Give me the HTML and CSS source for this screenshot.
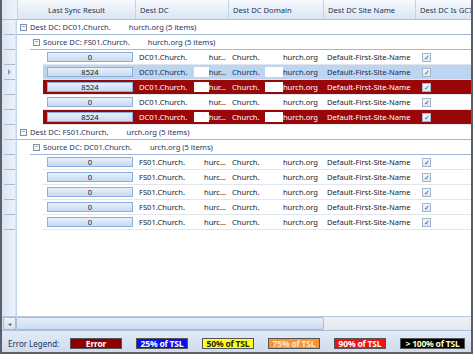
FILE: index.html
```html
<!DOCTYPE html>
<html lang="en">
<head>
    <meta charset="UTF-8">
    <title>Replication Status</title>
    <link rel="stylesheet" href="styles.css">
</head>
<body>
    <div class="window">
        <div class="header">
            <div class="corner"></div>
            <div class="hcell c-sync center">Last Sync Result</div>
            <div class="hcell c-dc">Dest DC</div>
            <div class="hcell c-dom">Dest DC Domain</div>
            <div class="hcell c-site">Dest DC Site Name</div>
            <div class="hcell c-gc">Dest DC Is GC?</div>
        </div>

        <div class="grid-body">
            <!-- group: Dest DC01 -->
            <div class="row">
                <div class="rh"></div>
                <div class="group">
                    <span class="exp">&minus;</span>Dest DC: DC01.Church.<span class="gap"></span>hurch.org (5 items)
                </div>
            </div>
            <div class="row">
                <div class="rh"></div>
                <div class="group lvl2">
                    <span class="exp">&minus;</span>Source DC: FS01.Church.<span class="gap"></span>hurch.org (5 items)
                </div>
            </div>

            <div class="row">
                <div class="rh"></div>
                <div class="indent"></div>
                <div class="cells">
                    <div class="c-sync2"><div class="sync">0</div></div>
                    <div class="cell c-dc"><span>DC01.Church.</span><span class="blob"></span><span>hur…</span></div>
                    <div class="cell c-dom"><span>Church.</span><span class="blob wide"></span><span>hurch.org</span></div>
                    <div class="cell c-site">Default-First-Site-Name</div>
                    <div class="cell c-gc"><span class="chk">&#10003;</span></div>
                </div>
            </div>
            <div class="row">
                <div class="rh"><span class="arrow"></span></div>
                <div class="indent"></div>
                <div class="cells selected">
                    <div class="c-sync2"><div class="sync">8524</div></div>
                    <div class="cell c-dc"><span>DC01.Church.</span><span class="blob"></span><span>hur…</span></div>
                    <div class="cell c-dom"><span>Church.</span><span class="blob wide"></span><span>hurch.org</span></div>
                    <div class="cell c-site">Default-First-Site-Name</div>
                    <div class="cell c-gc"><span class="chk">&#10003;</span></div>
                </div>
            </div>
            <div class="row">
                <div class="rh"></div>
                <div class="indent"></div>
                <div class="cells error">
                    <div class="c-sync2"><div class="sync">8524</div></div>
                    <div class="cell c-dc"><span>DC01.Church.</span><span class="blob"></span><span>hur…</span></div>
                    <div class="cell c-dom"><span>Church.</span><span class="blob wide"></span><span>hurch.org</span></div>
                    <div class="cell c-site">Default-First-Site-Name</div>
                    <div class="cell c-gc"><span class="chk">&#10003;</span></div>
                </div>
            </div>
            <div class="row">
                <div class="rh"></div>
                <div class="indent"></div>
                <div class="cells">
                    <div class="c-sync2"><div class="sync">0</div></div>
                    <div class="cell c-dc"><span>DC01.Church.</span><span class="blob"></span><span>hur…</span></div>
                    <div class="cell c-dom"><span>Church.</span><span class="blob wide"></span><span>hurch.org</span></div>
                    <div class="cell c-site">Default-First-Site-Name</div>
                    <div class="cell c-gc"><span class="chk">&#10003;</span></div>
                </div>
            </div>
            <div class="row">
                <div class="rh"></div>
                <div class="indent"></div>
                <div class="cells error">
                    <div class="c-sync2"><div class="sync">8524</div></div>
                    <div class="cell c-dc"><span>DC01.Church.</span><span class="blob"></span><span>hur…</span></div>
                    <div class="cell c-dom"><span>Church.</span><span class="blob wide"></span><span>hurch.org</span></div>
                    <div class="cell c-site">Default-First-Site-Name</div>
                    <div class="cell c-gc"><span class="chk">&#10003;</span></div>
                </div>
            </div>

            <!-- group: Dest FS01 -->
            <div class="row">
                <div class="rh"></div>
                <div class="group">
                    <span class="exp">&minus;</span>Dest DC: FS01.Church.<span class="gap"></span>urch.org (5 items)
                </div>
            </div>
            <div class="row">
                <div class="rh"></div>
                <div class="group lvl2">
                    <span class="exp">&minus;</span>Source DC: DC01.Church.<span class="gap"></span>urch.org (5 items)
                </div>
            </div>

            <div class="row">
                <div class="rh"></div>
                <div class="indent"></div>
                <div class="cells">
                    <div class="c-sync2"><div class="sync">0</div></div>
                    <div class="cell c-dc"><span>FS01.Church.</span><span class="blob"></span><span>hurc…</span></div>
                    <div class="cell c-dom"><span>Church.</span><span class="blob wide"></span><span>hurch.org</span></div>
                    <div class="cell c-site">Default-First-Site-Name</div>
                    <div class="cell c-gc"><span class="chk">&#10003;</span></div>
                </div>
            </div>
            <div class="row">
                <div class="rh"></div>
                <div class="indent"></div>
                <div class="cells">
                    <div class="c-sync2"><div class="sync">0</div></div>
                    <div class="cell c-dc"><span>FS01.Church.</span><span class="blob"></span><span>hurc…</span></div>
                    <div class="cell c-dom"><span>Church.</span><span class="blob wide"></span><span>hurch.org</span></div>
                    <div class="cell c-site">Default-First-Site-Name</div>
                    <div class="cell c-gc"><span class="chk">&#10003;</span></div>
                </div>
            </div>
            <div class="row">
                <div class="rh"></div>
                <div class="indent"></div>
                <div class="cells">
                    <div class="c-sync2"><div class="sync">0</div></div>
                    <div class="cell c-dc"><span>FS01.Church.</span><span class="blob"></span><span>hurc…</span></div>
                    <div class="cell c-dom"><span>Church.</span><span class="blob wide"></span><span>hurch.org</span></div>
                    <div class="cell c-site">Default-First-Site-Name</div>
                    <div class="cell c-gc"><span class="chk">&#10003;</span></div>
                </div>
            </div>
            <div class="row">
                <div class="rh"></div>
                <div class="indent"></div>
                <div class="cells">
                    <div class="c-sync2"><div class="sync">0</div></div>
                    <div class="cell c-dc"><span>FS01.Church.</span><span class="blob"></span><span>hurc…</span></div>
                    <div class="cell c-dom"><span>Church.</span><span class="blob wide"></span><span>hurch.org</span></div>
                    <div class="cell c-site">Default-First-Site-Name</div>
                    <div class="cell c-gc"><span class="chk">&#10003;</span></div>
                </div>
            </div>
            <div class="row">
                <div class="rh"></div>
                <div class="indent"></div>
                <div class="cells">
                    <div class="c-sync2"><div class="sync">0</div></div>
                    <div class="cell c-dc"><span>FS01.Church.</span><span class="blob"></span><span>hurc…</span></div>
                    <div class="cell c-dom"><span>Church.</span><span class="blob wide"></span><span>hurch.org</span></div>
                    <div class="cell c-site">Default-First-Site-Name</div>
                    <div class="cell c-gc"><span class="chk">&#10003;</span></div>
                </div>
            </div>
        </div>

        <div class="hscroll">
            <div class="sarrow">&#9666;</div>
            <div class="thumb"></div>
            <div class="track"></div>
        </div>

        <div class="legend">
            <span class="legend-label">Error Legend:</span>
            <span class="lbox l-error">Error</span>
            <span class="lbox l-25">25% of TSL</span>
            <span class="lbox l-50">50% of TSL</span>
            <span class="lbox l-75">75% of TSL</span>
            <span class="lbox l-90">90% of TSL</span>
            <span class="lbox l-100">&gt; 100% of TSL</span>
        </div>
    </div>
</body>
</html>
```

FILE: styles.css
```css
body {
    margin: 0;
    background: #fff;
    font-family: "Noto Sans", "Open Sans", sans-serif;
    font-size: 7.6px;
    color: #141c2a;
}
.window {
    width: 469px;
    height: 352px;
    border-left: 2px solid #5b6068;
    border-right: 2px solid #5b6068;
    border-bottom: 2px solid #5b6068;
    display: flex;
    flex-direction: column;
    background: #fff;
}
.header {
    height: 19px;
    flex: none;
    display: flex;
    background: linear-gradient(#f7fafe, #dae5f3);
    border-bottom: 1px solid #adc2de;
    color: #1a3356;
}
.corner {
    width: 15px;
    background: linear-gradient(to right, #dbe6f4, #eef3fa);
}
.hcell {
    display: flex;
    align-items: center;
    box-sizing: border-box;
    border-left: 1px solid #c3d3e8;
    padding-left: 4px;
    white-space: nowrap;
    overflow: hidden;
}
.center {
    justify-content: center;
    padding-left: 0;
}
.header .c-sync { width: 118px; }
.c-dc { width: 93px; }
.c-dom { width: 95px; }
.c-site { width: 92px; }
.c-gc { flex: 1; }

.grid-body {
    flex: 1;
    background: linear-gradient(to right, #d9e5f4 0, #edf3fb 13px, #c4d5ea 14px, #c4d5ea 15px, #fff 15px);
}
.row {
    height: 15px;
    display: flex;
}
.rh {
    width: 11px;
    margin: 0 2px;
    box-sizing: border-box;
    border-bottom: 1px solid #a9bbd3;
    display: flex;
    align-items: center;
    justify-content: center;
}
.arrow {
    width: 0;
    height: 0;
    border-top: 3px solid transparent;
    border-bottom: 3px solid transparent;
    border-left: 3px solid #8e9aab;
}
.group {
    flex: 1;
    display: flex;
    align-items: center;
    padding-left: 3px;
    border-bottom: 1px solid #9fb8da;
    color: #1c3661;
    white-space: nowrap;
}
.group.lvl2 {
    margin-left: 13px;
}
.exp {
    width: 5px;
    height: 5px;
    border: 1px solid #7f8fa6;
    background: #f3f6fa;
    margin-right: 3px;
    font-size: 6px;
    line-height: 5px;
    text-align: center;
    color: #333;
    overflow: hidden;
}
.gap {
    width: 18px;
}
.indent {
    width: 26px;
}
.cells {
    flex: 1;
    display: flex;
    align-items: stretch;
    border-bottom: 1px solid #e2e5e9;
    white-space: nowrap;
}
.cells.selected {
    background: #bcd5f1;
    color: #1b2c48;
}
.cells.error {
    background: #990808;
    color: #fff;
}
.c-sync2 {
    width: 92px;
    display: flex;
    align-items: center;
}
.sync {
    flex: 1;
    margin: 0 2px 0 4px;
    height: 10px;
    box-sizing: border-box;
    border: 1px solid #8cafdb;
    background: linear-gradient(#e8f0fb, #c7daf2);
    color: #141c2a;
    text-align: center;
    line-height: 8px;
}
.cell {
    display: flex;
    align-items: center;
    box-sizing: border-box;
    padding-left: 4px;
    overflow: hidden;
}
.cell.c-dc {
    padding-right: 2px;
}
.cell.c-dom {
    padding-right: 5px;
}
.blob {
    width: 15px;
    height: 10px;
    margin-left: auto;
    background: #fff;
}
.blob.wide {
    width: 18px;
}
.chk {
    width: 7px;
    height: 7px;
    border: 1px solid #a3b6ce;
    background: linear-gradient(#f4f7fb, #dfe7f1);
    color: #3d5474;
    font-size: 7px;
    line-height: 7px;
    text-align: center;
    margin-left: 3px;
}

.hscroll {
    height: 13px;
    flex: none;
    display: flex;
    align-items: stretch;
    background: #d7e3f3;
    border-top: 1px solid #b7c9e1;
}
.sarrow {
    width: 13px;
    margin-left: 1px;
    border: 1px solid #a9bcd6;
    box-sizing: border-box;
    background: linear-gradient(#eef4fb, #d3e0f1);
    color: #4d5b6e;
    font-size: 6px;
    display: flex;
    align-items: center;
    justify-content: center;
}
.thumb {
    width: 308px;
    box-sizing: border-box;
    border: 1px solid #a6bddb;
    border-radius: 2px;
    background: linear-gradient(#e7eff9, #cddcef);
}
.track {
    flex: 1;
    background: linear-gradient(#eef1f5, #e4e9ef);
}

.legend {
    height: 22px;
    flex: none;
    display: flex;
    align-items: center;
    padding-top: 3px;
    box-sizing: border-box;
    background: linear-gradient(#e2ebf6, #cfdcee);
    border-top: 1px solid #a7bddb;
    color: #1a3356;
}
.legend-label {
    width: 68px;
    flex: none;
    padding-left: 6px;
    box-sizing: border-box;
    font-size: 8px;
    white-space: nowrap;
}
.lbox {
    width: 52px;
    height: 11px;
    flex: none;
    margin-right: 14px;
    box-sizing: border-box;
    border: 1px solid #555;
    text-align: center;
    line-height: 9px;
    font-size: 8.5px;
    font-weight: bold;
    letter-spacing: -0.2px;
    color: #fff;
    white-space: nowrap;
}
.l-error { background: #8e0000; }
.l-25 { background: #0a10f0; }
.l-50 { background: #ffff1a; color: #222; }
.l-75 { background: #f79533; color: #fde7d0; }
.l-90 { background: #f21010; }
.l-100 { background: #000; color: #ffffc8; width: 65px; margin-right: 0; }
```
